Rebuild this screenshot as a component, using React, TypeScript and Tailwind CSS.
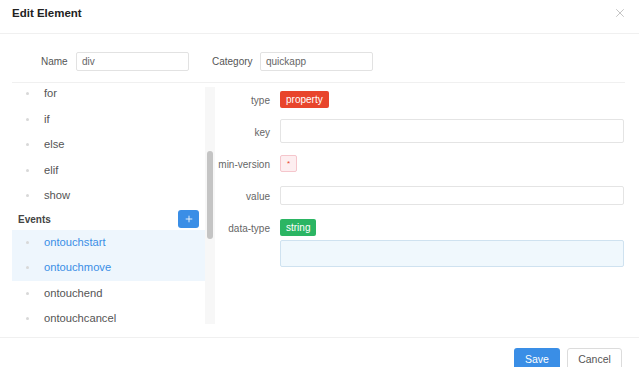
import React from 'react';
import { X, Plus } from 'lucide-react';

const font = { fontFamily: '"Liberation Sans", Arial, sans-serif' };

const attrs = ['for', 'if', 'else', 'elif', 'show'];
const events = [
  { name: 'ontouchstart', active: true },
  { name: 'ontouchmove', active: true },
  { name: 'ontouchend', active: false },
  { name: 'ontouchcancel', active: false },
];

const Item: React.FC<{ name: string; active?: boolean }> = ({ name, active }) => (
  <div className={`flex items-center h-[25.5px] shrink-0 ${active ? 'bg-[#eef6fd] text-[#3a8ee6]' : 'text-[#555]'}`}>
    <span className="w-[3px] h-[3px] rounded-full bg-[#d8d8d8] ml-[14px] mr-[15px]" />
    <span className="text-[11.2px]">{name}</span>
  </div>
);

const Row: React.FC<{ label: string; children: React.ReactNode; h?: string }> = ({ label, children, h }) => (
  <div className="flex items-start">
    <div className={`w-[65px] shrink-0 whitespace-nowrap text-right text-[10px] leading-[12px] text-[#666] pr-[10px] ${h ?? ''}`}>{label}</div>
    <div className="flex-1 flex flex-col items-stretch">{children}</div>
  </div>
);

export default function App() {
  return (
    <div className="w-[639px] h-[367px] bg-white overflow-hidden flex flex-col" style={font}>
      {/* Header */}
      <div className="h-[34px] flex items-center justify-between px-3 pb-[6px] border-b border-[#f0f0f0] shrink-0">
        <span className="text-[11.5px] font-bold text-[#222]">Edit Element</span>
        <X size={14} strokeWidth={1.2} className="text-[#aaa] -mt-[1px]" />
      </div>

      {/* Name / category */}
      <div className="ml-3 mr-[14px] h-[49px] border-b border-[#f0f0f0] flex items-center pt-[6px] shrink-0">
        <span className="text-[10px] text-[#555] ml-[29px] w-[35px]">Name</span>
        <div className="w-[113px] h-[19px] border border-[#e2e2e2] rounded-[2px] px-[5px] flex items-center text-[10px] text-[#666]">div</div>
        <span className="text-[10px] text-[#555] ml-[23px] w-[48px]">Category</span>
        <div className="w-[113px] h-[19px] border border-[#e2e2e2] rounded-[2px] px-[5px] flex items-center text-[10px] text-[#666]">quickapp</div>
      </div>

      {/* Body */}
      <div className="flex h-[242px] shrink-0">
        <div className="w-[193px] ml-3 flex flex-col -mt-[2px]">
          {attrs.map((a) => (
            <Item key={a} name={a} />
          ))}
          <div className="flex items-center justify-between h-[21px] shrink-0">
            <span className="text-[10px] font-bold text-[#444] ml-[6px]">Events</span>
            <div className="w-[21px] h-[18px] bg-[#3a8ee6] rounded-[3px] flex items-center justify-center mr-[6px]">
              <Plus size={10} strokeWidth={2} className="text-white" />
            </div>
          </div>
          {events.map((e) => (
            <Item key={e.name} name={e.name} active={e.active} />
          ))}
        </div>
        <div className="w-[10px] h-[237px] mt-[4px] bg-[#f7f7f7] relative">
          <div className="absolute left-[2px] top-[64px] w-[6px] h-[88px] rounded-full bg-[#c4c4c4]" />
        </div>

        <div className="flex-1 flex flex-col pt-[8px] pr-[15px]">
          <Row label="type" h="pt-[4px]">
            <span className="self-start bg-[#e8452c] text-white text-[10px] px-[6px] h-[17px] leading-[17px] rounded-[2px]">property</span>
          </Row>
          <div className="h-[11px]" />
          <Row label="key" h="pt-[8px]">
            <div className="h-[24px] border border-[#e4e4e4] rounded-[2px]" />
          </Row>
          <div className="h-[12px]" />
          <Row label="min-version" h="pt-[4px]">
            <span className="self-start flex items-center justify-center w-[17px] h-[17px] bg-[#fdeef0] border border-[#f5c6cc] rounded-[2px] text-[#e8452c] text-[8px]">*</span>
          </Row>
          <div className="h-[14px]" />
          <Row label="value" h="pt-[5px]">
            <div className="h-[19px] border border-[#e4e4e4] rounded-[2px]" />
          </Row>
          <div className="h-[14px]" />
          <Row label="data-type" h="pt-[4px]">
            <span className="self-start bg-[#2bb563] text-white text-[10px] px-[6px] h-[17px] leading-[17px] rounded-[2px]">string</span>
            <div className="h-[27px] mt-[4px] border border-[#cfe2f0] bg-[#f0f8fd] rounded-[2px]" />
          </Row>
        </div>
      </div>

      {/* Footer */}
      <div className="border-t border-[#f0f0f0] mt-[12px] flex justify-end gap-[7px] pr-[17px] pt-[10px]">
        <div className="w-[46px] h-[24px] bg-[#3a8ee6] rounded-[3px] text-white text-[10.5px] flex items-center justify-center">Save</div>
        <div className="w-[55px] h-[24px] border border-[#dcdcdc] rounded-[3px] text-[#555] text-[10.5px] flex items-center justify-center">Cancel</div>
      </div>
    </div>
  );
}
